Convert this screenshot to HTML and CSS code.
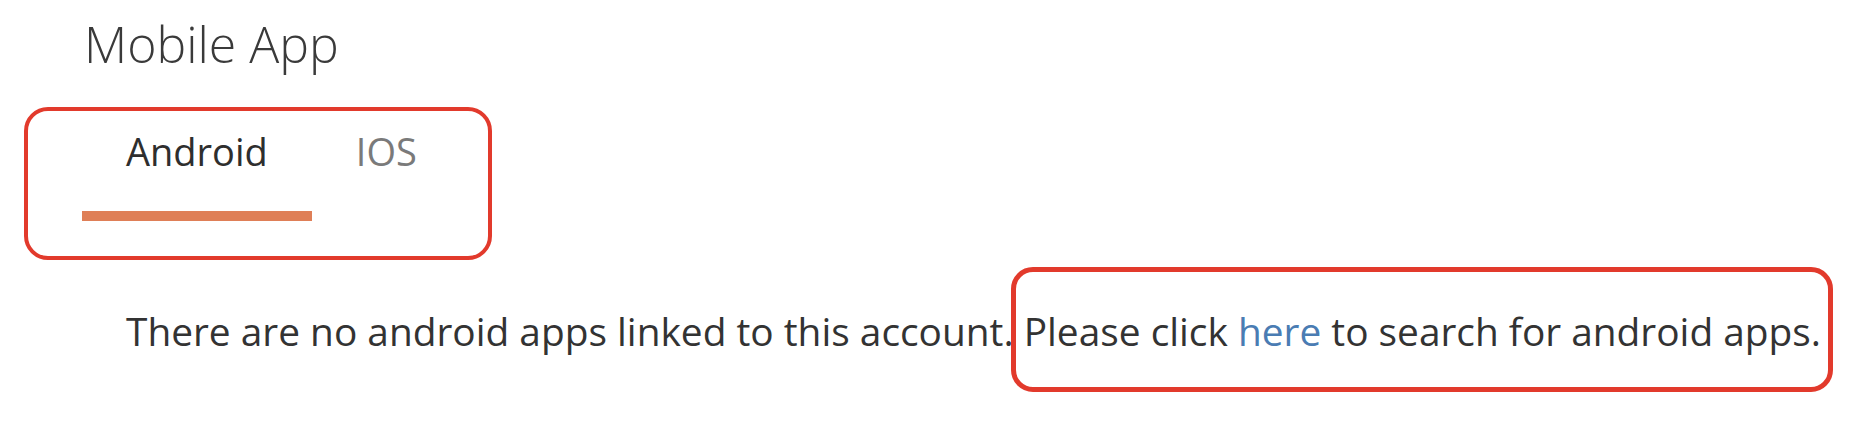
FILE: index.html
```html
<!DOCTYPE html>
<html lang="en">
<head>
<meta charset="utf-8">
<title>Mobile App</title>
<link rel="stylesheet" href="styles.css">
</head>
<body>
<div class="page">
  <h1 class="title">Mobile App</h1>
  <div class="tabs">
    <div class="tab active">Android</div>
    <div class="tab">IOS</div>
  </div>
  <p class="message">There are no android apps linked to this account. Please click <a class="link" href="#">here</a> to search for android apps.</p>
  <div class="mark mark-tabs"></div>
  <div class="mark mark-link"></div>
</div>
</body>
</html>
```
FILE: styles.css
```css
html, body {
  margin: 0;
  padding: 0;
  background: #ffffff;
}
.page {
  position: relative;
  width: 1862px;
  height: 422px;
  font-family: "Open Sans", "Liberation Sans", sans-serif;
  color: #333333;
  overflow: hidden;
}
.title {
  margin: 14px 0 0 84px;
  font-size: 50px;
  line-height: 60px;
  font-weight: 300;
  color: #3a3a3a;
}
.tabs {
  display: flex;
  margin: 54px 0 0 82px;
}
.tab {
  padding: 0 44px 37px;
  font-size: 38px;
  line-height: 46px;
  color: #7a7a7a;
  border-bottom: 10px solid transparent;
}
.tab.active {
  color: #2e2e2e;
  border-bottom-color: #df7f57;
}
.message {
  margin: 87px 0 0 126px;
  font-size: 38.85px;
  line-height: 46px;
  color: #333333;
  white-space: nowrap;
}
.link {
  color: #4a7cb3;
  text-decoration: none;
}
.mark {
  position: absolute;
  border: 4px solid #e23a2c;
  border-radius: 24px;
  box-sizing: border-box;
}
.mark-tabs {
  left: 24px;
  top: 107px;
  width: 468px;
  height: 153px;
}
.mark-link {
  left: 1011px;
  top: 267px;
  width: 822px;
  height: 125px;
  border-width: 5px;
  border-radius: 22px;
}
```
